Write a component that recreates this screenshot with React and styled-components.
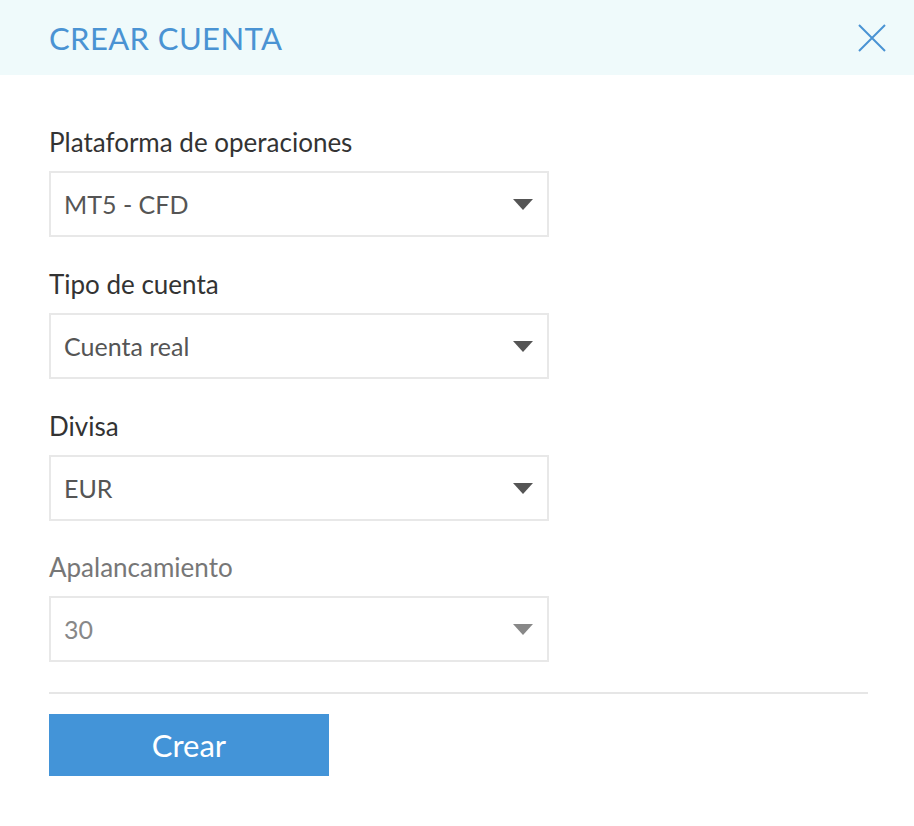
import styled, { createGlobalStyle } from "styled-components";

const GlobalStyle = createGlobalStyle`
  html, body {
    margin: 0;
    padding: 0;
    background: #ffffff;
    font-family: Lato, "Open Sans", sans-serif;
  }
`;

const fields = [
  { label: "Plataforma de operaciones", value: "MT5 - CFD" },
  { label: "Tipo de cuenta", value: "Cuenta real" },
  { label: "Divisa", value: "EUR" },
  { label: "Apalancamiento", value: "30", disabled: true },
];

function CloseIcon() {
  return (
    <svg width="30" height="30" viewBox="0 0 30 30" fill="none">
      <path d="M2 2L28 28M28 2L2 28" stroke="#4a93d3" strokeWidth="2" />
    </svg>
  );
}

function Caret({ disabled }) {
  return (
    <svg width="20" height="11" viewBox="0 0 20 11">
      <path d="M0 0H20L10 11Z" fill={disabled ? "#888888" : "#555555"} />
    </svg>
  );
}

function App() {
  return (
    <>
      <GlobalStyle />
      <StModal>
        <StHeader>
          <StTitle>CREAR CUENTA</StTitle>
          <StClose type="button" aria-label="Cerrar">
            <CloseIcon />
          </StClose>
        </StHeader>

        <StBody>
          {fields.map((field) => (
            <StField key={field.label}>
              <StLabel $disabled={field.disabled}>{field.label}</StLabel>
              <StSelect $disabled={field.disabled}>
                <span>{field.value}</span>
                <Caret disabled={field.disabled} />
              </StSelect>
            </StField>
          ))}

          <StDivider />

          <StButton type="button">Crear</StButton>
        </StBody>
      </StModal>
    </>
  );
}

export default App;

const StModal = styled.div`
  width: 914px;
  min-height: 826px;
  background: #ffffff;
`;

const StHeader = styled.div`
  display: flex;
  justify-content: space-between;
  align-items: center;
  height: 75px;
  padding: 0 27px 0 49px;
  background: #effafb;
`;

const StTitle = styled.h1`
  margin: 0;
  font-size: 31px;
  font-weight: 400;
  color: #4a93d3;
  letter-spacing: 0.4px;
`;

const StClose = styled.button`
  display: flex;
  padding: 0;
  border: none;
  background: transparent;
  cursor: pointer;
`;

const StBody = styled.div`
  display: flex;
  flex-direction: column;
  padding: 53px 46px 40px 49px;
`;

const StField = styled.div`
  display: flex;
  flex-direction: column;
  width: 500px;
  margin-bottom: 33px;

  &:nth-of-type(3) {
    margin-bottom: 32px;
  }

  &:last-of-type {
    margin-bottom: 30px;
  }
`;

const StLabel = styled.label`
  font-size: 26px;
  line-height: 29px;
  margin-bottom: 14px;
  color: ${(props) => (props.$disabled ? "#777777" : "#333333")};
`;

const StSelect = styled.div`
  display: flex;
  justify-content: space-between;
  align-items: center;
  box-sizing: border-box;
  height: 66px;
  padding: 0 14px 0 13px;
  border: 2px solid #e8e8e8;
  font-size: 25px;
  color: ${(props) => (props.$disabled ? "#888888" : "#555555")};
`;

const StDivider = styled.hr`
  width: 100%;
  height: 2px;
  margin: 0 0 20px;
  border: none;
  background: #e6e6e6;
`;

const StButton = styled.button`
  width: 280px;
  height: 62px;
  border: none;
  background: #4394d8;
  color: #ffffff;
  font-family: Lato, sans-serif;
  font-size: 31px;
  cursor: pointer;
`;
